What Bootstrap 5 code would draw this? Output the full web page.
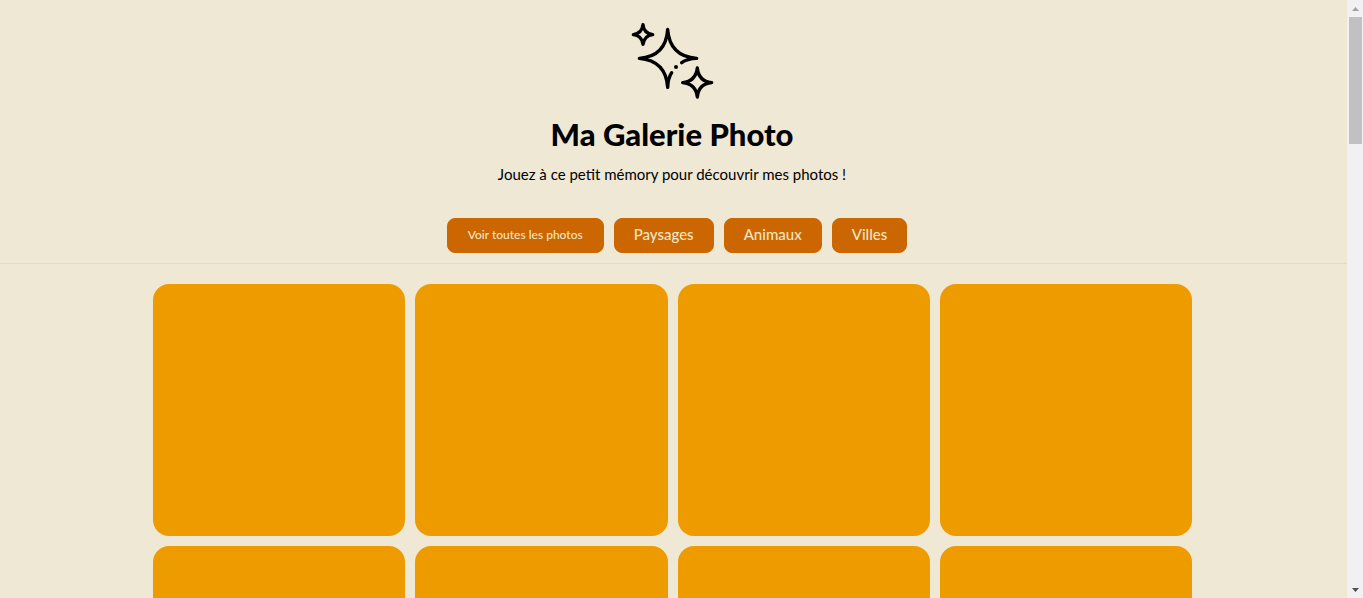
<!DOCTYPE html>
<html lang="fr">
<head>
<meta charset="utf-8">
<meta name="viewport" content="width=device-width, initial-scale=1">
<title>Ma Galerie Photo</title>
<link href="https://cdn.jsdelivr.net/npm/bootstrap@5.3.0/dist/css/bootstrap.min.css" rel="stylesheet">
<style>
  body { background: #efe8d5; color: #000; font-family: Lato, "Liberation Sans", sans-serif; }
  .site-header { border-bottom: 1px solid #e0ddd0; padding: 14px 3px 10px 0; }
  .site-title { font-size: 31px; line-height: 36px; font-weight: 900; margin: 8px 0 12px; }
  .intro { font-size: 15px; line-height: 20px; margin-bottom: 34px; }
  .filters { gap: 10px; padding-left: 10px; }
  .filter-btn { --bs-btn-color: #f3e5c5; --bs-btn-bg: #cb6600; --bs-btn-border-color: #cb6600;
    --bs-btn-hover-color: #fff; --bs-btn-hover-bg: #b35a00; --bs-btn-hover-border-color: #b35a00;
    --bs-btn-border-radius: 8px; --bs-btn-padding-x: 19px; --bs-btn-padding-y: 0px;
    --bs-btn-font-size: 15px; --bs-btn-font-weight: 500; height: 35px; line-height: 30px; padding-bottom: 3px; }
  .filter-all { --bs-btn-font-size: 12px; --bs-btn-padding-x: 20px; line-height: 32px; padding-bottom: 1px; }
  .gallery { width: 80%; padding: 20px 20px 20px 18px; display: grid; grid-template-columns: repeat(4, 1fr); gap: 10px; }
  .tile { aspect-ratio: 1; background: #ee9b00; border: 0; border-radius: 16px; }
  .scroll-rail { width: 16px; background: #f1f1f1; padding: 7px 1px 6px 2px; }
  .scroll-thumb { width: 13px; height: 127px; background: #c1c1c1; margin-top: 6px; }
</style>
</head>
<body>
<div class="d-flex vh-100 overflow-hidden">
  <div class="flex-grow-1">
    <header class="site-header text-center">
      <svg class="d-block mx-auto" width="100" height="94" viewBox="0 0 300 282" fill="none" stroke="#000" stroke-width="10" stroke-linecap="round" stroke-linejoin="round" aria-hidden="true">
        <path d="M63 32Q65 58 92 62Q67 65 63 91Q60 65 34 62Q60 58 63 32Z"/>
        <path d="M149 176Q138 193 137 220Q132 140 52 133Q132 127 137 46Q143 127 224 133Q195 134 179 146"/>
        <path d="M226 162Q230 202 269 206Q230 209 226 249Q221 209 182 206Q221 202 226 162Z"/>
        <circle cx="162" cy="159" r="6" fill="#000" stroke="none"/>
      </svg>
      <h1 class="site-title">Ma Galerie Photo</h1>
      <p class="intro">Jouez à ce petit mémory pour découvrir mes photos !</p>
      <div class="filters d-flex justify-content-center">
        <button type="button" class="btn filter-btn filter-all">Voir toutes les photos</button>
        <button type="button" class="btn filter-btn">Paysages</button>
        <button type="button" class="btn filter-btn">Animaux</button>
        <button type="button" class="btn filter-btn">Villes</button>
      </div>
    </header>
    <main class="gallery mx-auto">
      <button type="button" class="tile" aria-label="Carte 1"></button>
      <button type="button" class="tile" aria-label="Carte 2"></button>
      <button type="button" class="tile" aria-label="Carte 3"></button>
      <button type="button" class="tile" aria-label="Carte 4"></button>
      <button type="button" class="tile" aria-label="Carte 5"></button>
      <button type="button" class="tile" aria-label="Carte 6"></button>
      <button type="button" class="tile" aria-label="Carte 7"></button>
      <button type="button" class="tile" aria-label="Carte 8"></button>
    </main>
  </div>
  <div class="scroll-rail d-flex flex-column flex-shrink-0" aria-hidden="true">
    <svg class="align-self-center" width="7" height="4" viewBox="0 0 7 4"><path d="M0 4L3.5 0L7 4Z" fill="#a3a3a3"/></svg>
    <div class="scroll-thumb"></div>
    <svg class="align-self-center mt-auto" width="7" height="4" viewBox="0 0 7 4"><path d="M0 0L3.5 4L7 0Z" fill="#505050"/></svg>
  </div>
</div>
<script src="https://cdn.jsdelivr.net/npm/bootstrap@5.3.0/dist/js/bootstrap.bundle.min.js"></script>
</body>
</html>
